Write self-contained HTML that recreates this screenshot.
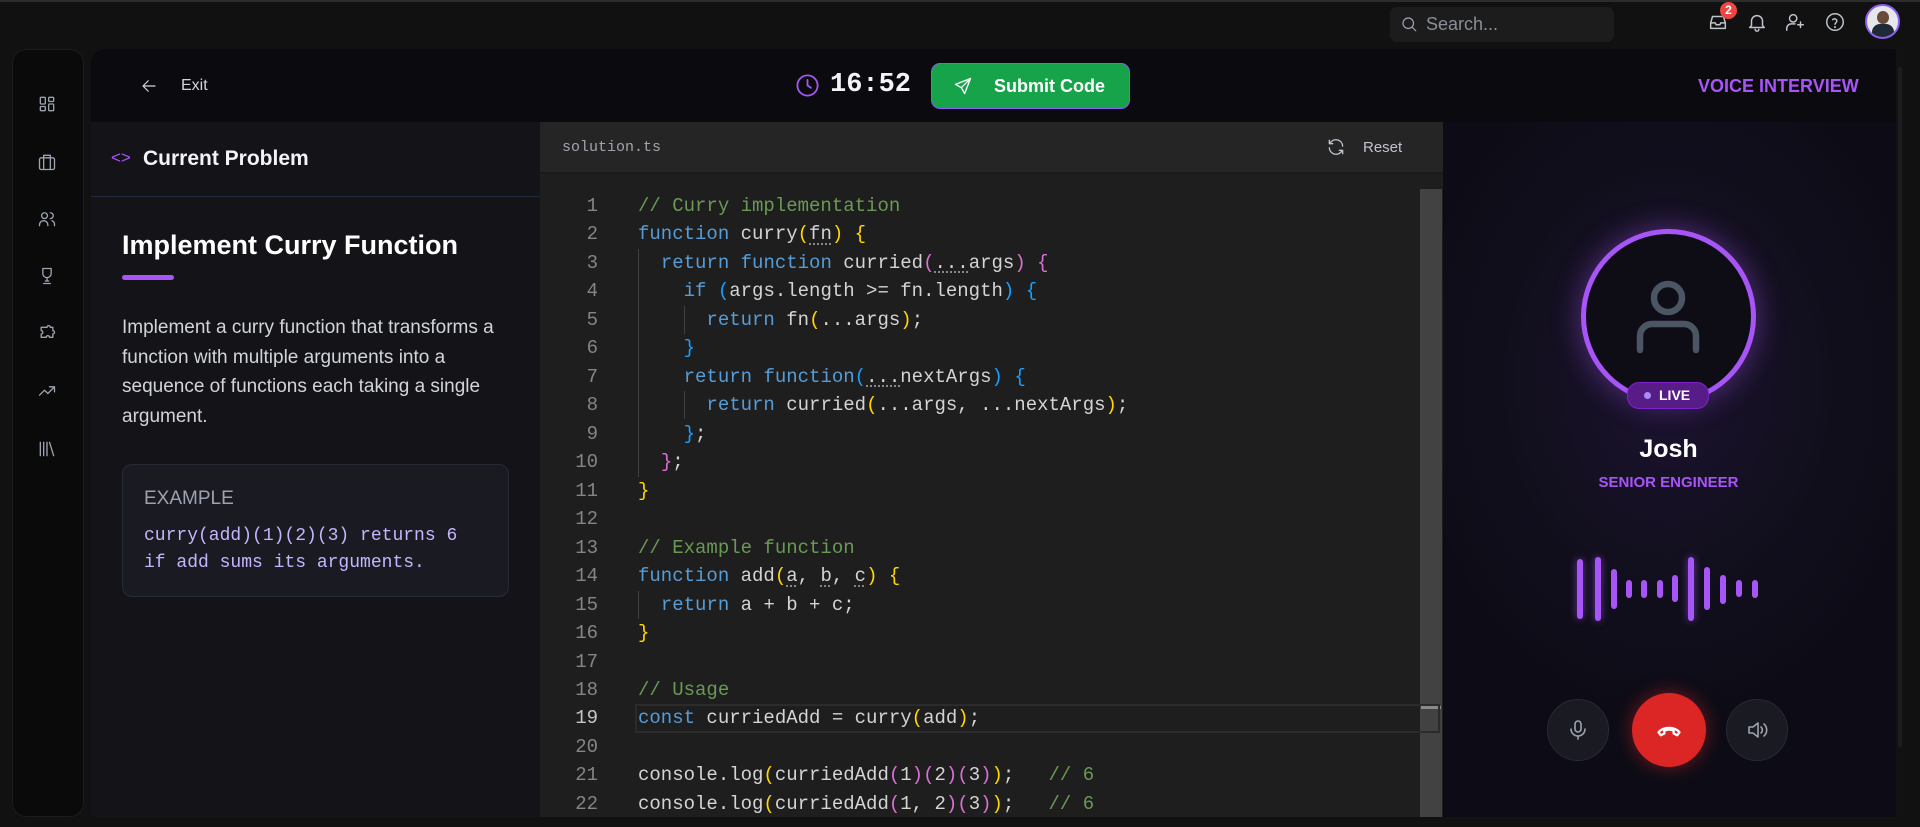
<!DOCTYPE html>
<html><head><meta charset="utf-8">
<style>
*{box-sizing:border-box;margin:0;padding:0}
body{width:1920px;height:827px;background:#111111;overflow:hidden;position:relative;font-family:"Liberation Sans",sans-serif;color:#e5e7eb}
.abs{position:absolute}
.mono{font-family:"Liberation Mono","DejaVu Sans Mono",monospace}
pre{font-family:"Liberation Mono","DejaVu Sans Mono",monospace;font-size:19px;line-height:28.47px;color:#d4d4d4}
.k{color:#569cd6}.c{color:#6a9955}.y{color:#ffd700}.p{color:#da70d6}.b{color:#179fff}
.dot{text-decoration:underline dotted #888;text-underline-offset:4px}
.guide{position:absolute;width:1px;background:#404040}
.ico{position:absolute;stroke:#9ca3af;fill:none;stroke-width:1.6;stroke-linecap:round;stroke-linejoin:round}
</style></head><body>
<div class="abs" style="left:0;top:0;width:1920px;height:2px;background:#2c2c2c"></div>

<!-- top bar -->
<div class="abs" style="left:1390px;top:7px;width:224px;height:35px;background:#1c1c1c;border-radius:7px"></div>
<svg class="ico" style="left:1400px;top:15px" width="18" height="18" viewBox="0 0 24 24" stroke-width="2"><circle cx="11" cy="11" r="7"/><path d="M16 16l5 5"/></svg>
<div class="abs" style="left:1426px;top:14px;font-size:18px;color:#8a8f98">Search...</div>
<svg class="ico" style="left:1707px;top:11px;stroke:#c0c4cc" width="22" height="22" viewBox="0 0 24 24"><path d="M4 13l2-7h12l2 7v6H4z"/><path d="M4 13h5l1 2h4l1-2h5"/></svg>
<div class="abs" style="left:1720px;top:2px;width:17px;height:17px;border-radius:50%;background:#ef4444;color:#fff;font-size:12px;font-weight:bold;text-align:center;line-height:17px">2</div>
<svg class="ico" style="left:1746px;top:11px;stroke:#c0c4cc" width="22" height="22" viewBox="0 0 24 24"><path d="M6 16V11a6 6 0 0112 0v5l2 2H4z"/><path d="M10 20a2 2 0 004 0"/></svg>
<svg class="ico" style="left:1784px;top:11px;stroke:#c0c4cc" width="22" height="22" viewBox="0 0 24 24"><circle cx="10" cy="8" r="4"/><path d="M3 21v-2a5 5 0 015-5h4"/><path d="M18 12v6M15 15h6"/></svg>
<svg class="ico" style="left:1824px;top:11px;stroke:#c0c4cc" width="22" height="22" viewBox="0 0 24 24"><circle cx="12" cy="12" r="9"/><path d="M9.5 9.5a2.5 2.5 0 014.5 1.5c0 1.5-2 2-2 3.5"/><circle cx="12" cy="17.5" r=".4"/></svg>
<div class="abs" style="left:1865px;top:4px;width:35px;height:35px;border-radius:50%;border:2px solid #8b5cf6;background:#e5e7eb;overflow:hidden">
<div class="abs" style="left:10px;top:5px;width:12px;height:13px;border-radius:50%;background:#6b4a3a"></div>
<div class="abs" style="left:5px;top:18px;width:22px;height:16px;border-radius:8px 8px 0 0;background:#1f2937"></div></div>

<!-- sidebar -->
<div class="abs" style="left:12px;top:49px;width:72px;height:768px;background:#0a0a0a;border:1px solid #1c1c1c;border-radius:14px"></div>
<svg class="ico" style="left:37px;top:94px" width="20" height="20" viewBox="0 0 24 24"><rect x="4" y="4" width="6" height="8" rx="1"/><rect x="14" y="4" width="6" height="5" rx="1"/><rect x="4" y="15" width="6" height="5" rx="1"/><rect x="14" y="12" width="6" height="8" rx="1"/></svg>
<svg class="ico" style="left:37px;top:152px" width="20" height="20" viewBox="0 0 24 24"><rect x="3" y="7" width="18" height="14" rx="2"/><path d="M8 7V4h8v3M8 7v14M16 7v14"/></svg>
<svg class="ico" style="left:37px;top:209px" width="20" height="20" viewBox="0 0 24 24"><circle cx="9" cy="8" r="3.5"/><path d="M3 20v-1a5 5 0 0110 0v1"/><path d="M16 4.5a3.5 3.5 0 010 7M18 14a5 5 0 013 5v1"/></svg>
<svg class="ico" style="left:37px;top:266px" width="20" height="20" viewBox="0 0 24 24"><path d="M7 3h10v6a5 5 0 01-10 0z"/><path d="M12 14v4M8 21h8M10 18h4"/></svg>
<svg class="ico" style="left:37px;top:324px" width="20" height="20" viewBox="0 0 24 24"><path d="M9 4h3a2 2 0 014 0h3v4a2 2 0 010 4v4h-4a2 2 0 00-4 0H5v-4a2 2 0 000-4V4z"/></svg>
<svg class="ico" style="left:37px;top:381px" width="20" height="20" viewBox="0 0 24 24"><path d="M3 17l6-6 4 4 8-8M15 7h6v6"/></svg>
<svg class="ico" style="left:37px;top:439px" width="20" height="20" viewBox="0 0 24 24"><path d="M4 4v16M8 4v16M12 4v16M15 4l5 16"/></svg>

<!-- main container -->
<div class="abs" style="left:91px;top:49px;width:1813px;height:768px;background:#0b0b0f;border-radius:14px;overflow:hidden"></div>
<svg class="ico" style="left:140px;top:77px;stroke:#d1d5db" width="18" height="18" viewBox="0 0 24 24" stroke-width="2"><path d="M20 12H5M11 5l-7 7 7 7"/></svg>
<div class="abs" style="left:181px;top:77px;font-size:16px;color:#d1d5db">Exit</div>
<svg class="ico" style="left:794px;top:72px;stroke:#a855f7" width="27" height="27" viewBox="0 0 24 24" stroke-width="2.2"><circle cx="12" cy="12" r="9"/><path d="M12 7v5l3 2"/></svg>
<div class="abs mono" style="left:830px;top:70px;font-size:27px;font-weight:bold;color:#f3f4f6">16:52</div>
<div class="abs" style="left:931px;top:63px;width:199px;height:46px;background:#16a34a;border:1.5px solid #8b5cf6;border-radius:9px"></div>
<svg class="ico" style="left:953px;top:76px;stroke:#fff" width="20" height="20" viewBox="0 0 24 24" stroke-width="2"><path d="M21 3L10 14M21 3l-7 18-4-7-7-4z"/></svg>
<div class="abs" style="left:994px;top:76px;font-size:18px;font-weight:bold;color:#fff">Submit Code</div>
<div class="abs" style="left:1698px;top:76px;font-size:18px;font-weight:bold;color:#a855f7">VOICE INTERVIEW</div>

<!-- left panel -->
<div class="abs" style="left:91px;top:122px;width:449px;height:695px;background:#141418"></div>
<div class="abs" style="left:91px;top:196px;width:449px;height:1px;background:#1f2a3a"></div>
<div class="abs" style="left:111px;top:148px;font-size:17px;color:#a855f7">&lt;&gt;</div>
<div class="abs" style="left:143px;top:147px;font-size:21px;font-weight:bold;color:#f3f4f6">Current Problem</div>
<div class="abs" style="left:122px;top:230px;font-size:27px;font-weight:bold;color:#fff">Implement Curry Function</div>
<div class="abs" style="left:122px;top:275px;width:52px;height:5px;border-radius:3px;background:#a855f7"></div>
<div class="abs" style="left:122px;top:313px;width:390px;font-size:19px;line-height:29.6px;color:#d1d5db">Implement a curry function that transforms a function with multiple arguments into a sequence of functions each taking a single argument.</div>
<div class="abs" style="left:122px;top:464px;width:387px;height:133px;background:#1a1a22;border:1px solid #262a36;border-radius:10px"></div>
<div class="abs" style="left:144px;top:488px;font-size:19px;color:#9ca3af">EXAMPLE</div>
<div class="abs mono" style="left:144px;top:523px;font-size:18px;line-height:27px;color:#c4b5fd">curry(add)(1)(2)(3) returns 6<br>if add sums its arguments.</div>

<!-- editor -->
<div class="abs" style="left:540px;top:122px;width:903px;height:52px;background:#252526;border-bottom:2px solid #1a1a1a"></div>
<div class="abs mono" style="left:562px;top:139px;font-size:15px;color:#a0a4ab">solution.ts</div>
<svg class="ico" style="left:1326px;top:137px;stroke:#c0c4cc" width="20" height="20" viewBox="0 0 24 24" stroke-width="1.8"><path d="M20 11a8 8 0 00-14-5l-2 2M4 4v4h4M4 13a8 8 0 0014 5l2-2M20 20v-4h-4"/></svg>
<div class="abs" style="left:1363px;top:139px;font-size:15px;color:#c0c4cc">Reset</div>
<div class="abs" style="left:540px;top:174px;width:903px;height:643px;background:#1e1e1e"></div>
<div class="abs" style="left:1420px;top:189px;width:22px;height:628px;background:#424242"></div>
<div class="abs" style="left:1421px;top:706px;width:20px;height:3px;background:#8a8a8a"></div>
<div class="abs" style="left:635px;top:704px;width:805px;height:29px;border:2px solid #2b2b2b"></div>

<pre class="abs" style="left:548px;top:192px;width:50px;text-align:right;color:#858585">1
2
3
4
5
6
7
8
9
10
11
12
13
14
15
16
17
18
<span style="color:#c6c6c6">19</span>
20
21
22</pre>
<div class="guide" style="left:638px;top:249px;height:228px"></div>
<div class="guide" style="left:684px;top:306px;height:28px"></div>
<div class="guide" style="left:684px;top:391px;height:28px"></div>
<div class="guide" style="left:638px;top:591px;height:28px"></div>
<pre class="abs" style="left:638px;top:192px"><span class="c">// Curry implementation</span>
<span class="k">function</span> curry<span class="y">(</span><span class="dot">fn</span><span class="y">)</span> <span class="y">{</span>
  <span class="k">return</span> <span class="k">function</span> curried<span class="p">(</span><span class="dot">...</span>args<span class="p">)</span> <span class="p">{</span>
    <span class="k">if</span> <span class="b">(</span>args.length &gt;= fn.length<span class="b">)</span> <span class="b">{</span>
      <span class="k">return</span> fn<span class="y">(</span>...args<span class="y">)</span>;
    <span class="b">}</span>
    <span class="k">return</span> <span class="k">function</span><span class="b">(</span><span class="dot">...</span>nextArgs<span class="b">)</span> <span class="b">{</span>
      <span class="k">return</span> curried<span class="y">(</span>...args, ...nextArgs<span class="y">)</span>;
    <span class="b">}</span>;
  <span class="p">}</span>;
<span class="y">}</span>

<span class="c">// Example function</span>
<span class="k">function</span> add<span class="y">(</span><span class="dot">a</span>, <span class="dot">b</span>, <span class="dot">c</span><span class="y">)</span> <span class="y">{</span>
  <span class="k">return</span> a + b + c;
<span class="y">}</span>

<span class="c">// Usage</span>
<span class="k">const</span> curriedAdd = curry<span class="y">(</span>add<span class="y">)</span>;

console.log<span class="y">(</span>curriedAdd<span class="p">(</span>1<span class="p">)(</span>2<span class="p">)(</span>3<span class="p">)</span><span class="y">)</span>;   <span class="c">// 6</span>
console.log<span class="y">(</span>curriedAdd<span class="p">(</span>1, 2<span class="p">)(</span>3<span class="p">)</span><span class="y">)</span>;   <span class="c">// 6</span></pre>

<!-- right panel -->
<div class="abs" style="left:1443px;top:122px;width:453px;height:695px;background:radial-gradient(ellipse 260px 340px at 225px 260px,#1c1330 0%,#120f1e 55%,#0d0c16 100%)"></div>
<div class="abs" style="left:1896px;top:49px;width:8px;height:768px;background:#121212"></div>
<div class="abs" style="left:1898px;top:67px;width:4px;height:680px;border-radius:2px;background:#1d1d1d"></div>
<div class="abs" style="left:1581px;top:229px;width:175px;height:175px;border-radius:50%;border:5px solid #a855f7;background:#0e0d16;box-shadow:0 0 30px rgba(168,85,247,.45)"></div>
<svg class="abs" style="left:1631px;top:274px" width="75" height="80" viewBox="0 0 75 80" fill="none" stroke="#4b5563" stroke-width="6.5" stroke-linecap="round"><circle cx="37" cy="24" r="14"/><path d="M9 76V62a12 12 0 0112-12h32a12 12 0 0112 12v14"/></svg>
<div class="abs" style="left:1627px;top:382px;width:82px;height:27px;border-radius:12px;background:#581c87;border:1px solid #7e22ce"></div>
<div class="abs" style="left:1644px;top:392px;width:7px;height:7px;border-radius:50%;background:#a78bfa"></div>
<div class="abs" style="left:1659px;top:387px;font-size:14px;font-weight:bold;color:#fff">LIVE</div>
<div class="abs" style="left:1443px;top:435px;width:451px;text-align:center;font-size:25px;font-weight:bold;color:#fff">Josh</div>
<div class="abs" style="left:1443px;top:474px;width:451px;text-align:center;font-size:15px;font-weight:bold;color:#a855f7">SENIOR ENGINEER</div>
<div class="abs" style="left:0;top:0">
<div class="abs" style="left:1577px;top:559px;width:6px;height:60px;border-radius:3px;background:#a855f7;box-shadow:0 0 8px rgba(168,85,247,.6)"></div>
<div class="abs" style="left:1595px;top:557px;width:6px;height:64px;border-radius:3px;background:#a855f7;box-shadow:0 0 8px rgba(168,85,247,.6)"></div>
<div class="abs" style="left:1611px;top:569px;width:6px;height:40px;border-radius:3px;background:#a855f7"></div>
<div class="abs" style="left:1626px;top:580px;width:6px;height:18px;border-radius:3px;background:#a855f7"></div>
<div class="abs" style="left:1641px;top:580px;width:6px;height:18px;border-radius:3px;background:#a855f7"></div>
<div class="abs" style="left:1657px;top:580px;width:6px;height:18px;border-radius:3px;background:#a855f7"></div>
<div class="abs" style="left:1672px;top:575px;width:6px;height:27px;border-radius:3px;background:#a855f7"></div>
<div class="abs" style="left:1688px;top:557px;width:6px;height:64px;border-radius:3px;background:#a855f7;box-shadow:0 0 8px rgba(168,85,247,.6)"></div>
<div class="abs" style="left:1704px;top:567px;width:6px;height:43px;border-radius:3px;background:#a855f7"></div>
<div class="abs" style="left:1720px;top:575px;width:6px;height:29px;border-radius:3px;background:#a855f7"></div>
<div class="abs" style="left:1736px;top:580px;width:6px;height:17px;border-radius:3px;background:#a855f7"></div>
<div class="abs" style="left:1752px;top:580px;width:6px;height:18px;border-radius:3px;background:#a855f7"></div>
</div>
<div class="abs" style="left:1547px;top:699px;width:62px;height:62px;border-radius:50%;background:#1a1a22;border:1px solid #262a34"></div>
<svg class="ico" style="left:1566px;top:718px" width="24" height="24" viewBox="0 0 24 24" stroke-width="1.8"><rect x="9" y="3" width="6" height="11" rx="3"/><path d="M5 11a7 7 0 0014 0M12 18v3"/></svg>
<div class="abs" style="left:1632px;top:693px;width:74px;height:74px;border-radius:50%;background:#dc2626;box-shadow:0 0 18px rgba(220,38,38,.5)"></div>
<svg class="abs" style="left:1655px;top:716px" width="28" height="28" viewBox="0 0 24 24" fill="none" stroke="#fff" stroke-width="2" stroke-linejoin="round"><path d="M3 14c4-5 14-5 18 0l-2 2.5-3-1.5v-2.5a10 10 0 00-8 0V15l-3 1.5z"/></svg>
<div class="abs" style="left:1726px;top:699px;width:62px;height:62px;border-radius:50%;background:#1a1a22;border:1px solid #262a34"></div>
<svg class="ico" style="left:1745px;top:718px" width="24" height="24" viewBox="0 0 24 24" stroke-width="1.8"><path d="M4 9h4l5-4v14l-5-4H4z"/><path d="M16 9a4 4 0 010 6M19 6a8 8 0 010 12"/></svg>
</body></html>
